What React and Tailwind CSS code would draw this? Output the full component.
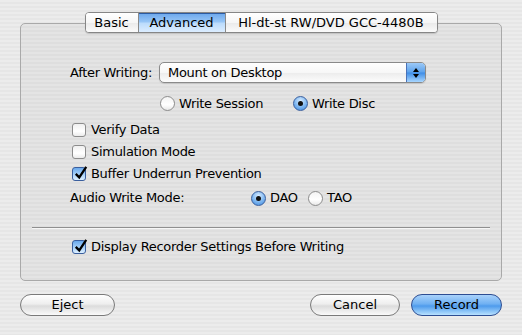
import React, { useState } from "react";

const font = "font-['DejaVu_Sans','Liberation_Sans',sans-serif]";

function Radio({ checked, label, onClick, className = "" }) {
  return (
    <button type="button" onClick={onClick} className={`flex items-center gap-[4px] ${className}`}>
      <span
        className={`flex h-[15px] w-[15px] items-center justify-center rounded-full border ${
          checked
            ? "border-[#3a5f9e] bg-[radial-gradient(circle_at_50%_30%,#d8ecff_0%,#7db6f0_55%,#3d87dc_100%)]"
            : "border-[#8c8c8c] bg-[linear-gradient(#f4f4f4,#ffffff_60%,#e8e8e8)]"
        }`}
      >
        {checked && <span className="h-[5px] w-[5px] rounded-full bg-[#111]" />}
      </span>
      <span>{label}</span>
    </button>
  );
}

function Checkbox({ checked, label, onClick }) {
  return (
    <button type="button" onClick={onClick} className="flex items-center gap-[5px]">
      <span
        className={`relative h-[14px] w-[14px] rounded-[3px] border ${
          checked
            ? "border-[#3a5f9e] bg-[linear-gradient(#6aa9ec,#a9d2fa_55%,#dcefff)]"
            : "border-[#8c8c8c] bg-[linear-gradient(#f0f0f0,#ffffff_60%,#ebebeb)]"
        }`}
      >
        {checked && (
          <svg viewBox="0 0 16 16" className="absolute left-[1px] top-[-3px] h-[16px] w-[14px]">
            <path d="M2 9 L6 13 L14 1" fill="none" stroke="#000" strokeWidth="2.6" strokeLinejoin="miter" />
          </svg>
        )}
      </span>
      <span>{label}</span>
    </button>
  );
}

function PillButton({ children, primary, className = "" }) {
  return (
    <button
      type="button"
      className={`flex h-[22px] items-center justify-center rounded-full border text-[13px] ${
        primary
          ? "border-[#2d4d92] bg-[linear-gradient(#a9d2fb,#6fb0f2_45%,#4e9bec_55%,#b7e1ff)]"
          : "border-[#7a7a7a] bg-[linear-gradient(#ffffff,#eeeeee_45%,#dcdcdc_55%,#fafafa)]"
      } ${className}`}
    >
      {children}
    </button>
  );
}

export default function App() {
  const [tab, setTab] = useState("Advanced");
  const [mode, setMode] = useState("disc");
  const [audio, setAudio] = useState("DAO");
  const [verify, setVerify] = useState(false);
  const [sim, setSim] = useState(false);
  const [buffer, setBuffer] = useState(true);
  const [display, setDisplay] = useState(true);

  const tabs = [
    { name: "Basic", w: "w-[52px]" },
    { name: "Advanced", w: "w-[87px]" },
    { name: "Hl-dt-st RW/DVD GCC-4480B", w: "w-[212px]" },
  ];

  return (
    <div
      className={`flex h-[335px] w-[522px] flex-col pt-[12px] text-[13px] text-black ${font} bg-[repeating-linear-gradient(#ececec_0px,#ececec_2px,#e6e6e6_2px,#e6e6e6_4px)]`}
    >
      <div className="relative z-10 mx-auto -mb-[10px] flex h-[21px] rounded-[4px] border border-[#868686] bg-white shadow-[0_1px_1px_rgba(0,0,0,0.15)]">
        {tabs.map((t, i) => (
          <button
            key={t.name}
            type="button"
            onClick={() => setTab(t.name)}
            className={`flex h-full items-center justify-center ${t.w} ${i > 0 ? "border-l border-[#8a8a8a]" : ""} ${
              i === 0 ? "rounded-l-[3px]" : ""
            } ${i === tabs.length - 1 ? "rounded-r-[3px]" : ""} ${
              tab === t.name
                ? "bg-[linear-gradient(#6aa6ec,#96c5f6_45%,#bcdcfc_55%,#dcedff)] shadow-[inset_0_1px_0_#2c5aa0]"
                : "bg-[linear-gradient(#ffffff,#f6f6f6_50%,#eaeaea_52%,#fbfbfb)]"
            }`}
          >
            {t.name}
          </button>
        ))}
      </div>

      <div className="mx-[20px] flex h-[258px] flex-col rounded-[5px] border border-[#a9a9a9] bg-[repeating-linear-gradient(#e4e4e4_0px,#e4e4e4_2px,#dedede_2px,#dedede_4px)] pl-[49px] pt-[38px] tracking-[-0.3px]">
        <div className="flex h-[21px] items-center">
          <span className="w-[89px]">After Writing:</span>
          <div className="flex h-[21px] w-[267px] items-center rounded-[5px] border border-[#8a8a8a] bg-[linear-gradient(#ffffff,#f7f7f7_50%,#ececec_52%,#fcfcfc)] shadow-[0_1px_1px_rgba(0,0,0,0.12)]">
            <span className="flex-1 pl-[8px]">Mount on Desktop</span>
            <span className="flex h-full w-[19px] flex-col items-center justify-center gap-[2px] rounded-r-[4px] border-l border-[#4a72b8] bg-[linear-gradient(#9cc9f7,#5ea3ec_48%,#3f8de6_52%,#a8d6ff)]">
              <svg viewBox="0 0 6 4" className="h-[4px] w-[6px]"><path d="M3 0 L6 4 L0 4 Z" fill="#000" /></svg>
              <svg viewBox="0 0 6 4" className="h-[4px] w-[6px]"><path d="M0 0 L6 0 L3 4 Z" fill="#000" /></svg>
            </span>
          </div>
        </div>

        <div className="mt-[13px] flex h-[15px] items-center pl-[90px]">
          <Radio checked={mode === "session"} label="Write Session" onClick={() => setMode("session")} className="w-[133px]" />
          <Radio checked={mode === "disc"} label="Write Disc" onClick={() => setMode("disc")} />
        </div>

        <div className="mt-[8px] flex flex-col pl-[2px]">
          <div className="flex h-[22px] items-center">
            <Checkbox checked={verify} label="Verify Data" onClick={() => setVerify(!verify)} />
          </div>
          <div className="flex h-[22px] items-center">
            <Checkbox checked={sim} label="Simulation Mode" onClick={() => setSim(!sim)} />
          </div>
          <div className="flex h-[22px] items-center">
            <Checkbox checked={buffer} label="Buffer Underrun Prevention" onClick={() => setBuffer(!buffer)} />
          </div>
        </div>

        <div className="mt-[2px] flex h-[22px] items-center">
          <span className="w-[181px]">Audio Write Mode:</span>
          <Radio checked={audio === "DAO"} label="DAO" onClick={() => setAudio("DAO")} className="w-[57px]" />
          <Radio checked={audio === "TAO"} label="TAO" onClick={() => setAudio("TAO")} />
        </div>

        <div className="-ml-[38px] mr-[11px] mt-[18px] h-[1px] bg-[#8f8f8f] shadow-[0_1px_0_#f6f6f6]" />

        <div className="mt-[8px] flex h-[22px] items-center pl-[2px]">
          <Checkbox checked={display} label="Display Recorder Settings Before Writing" onClick={() => setDisplay(!display)} />
        </div>
      </div>

      <div className="mx-[20px] mt-[13px] flex items-center">
        <PillButton className="w-[95px]">Eject</PillButton>
        <div className="flex-1" />
        <PillButton className="w-[90px]">Cancel</PillButton>
        <PillButton primary className="ml-[11px] w-[91px]">Record</PillButton>
      </div>
    </div>
  );
}
